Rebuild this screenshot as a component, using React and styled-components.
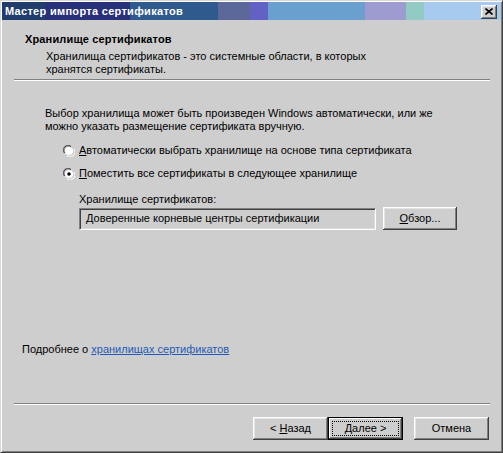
import styled, {createGlobalStyle, css} from "styled-components";

const GlobalStyle = createGlobalStyle`
    html, body {
        margin: 0;
        padding: 0;
        background: #cecece;
    }
    * {
        box-sizing: border-box;
    }
`;

const Raised = css`
    border: none;
    background: #cecece;
    box-shadow: inset -1px -1px #404040, inset 1px 1px #ffffff,
        inset -2px -2px #808080, inset 2px 2px #e4e4e4;
`;

const Window = styled.div`
    display: flex;
    flex-direction: column;
    width: 503px;
    height: 453px;
    padding: 1px;
    background: #cecece;
    border: 1px solid;
    border-color: #d8d8d8 #404040 #404040 #d8d8d8;
    box-shadow: inset 1px 1px #ffffff, inset -1px -1px #808080;
    font-family: "Liberation Sans", Arial, sans-serif;
    font-size: 11px;
    line-height: 13px;
    color: #000;
`;

const TitleBar = styled.div`
    display: flex;
    align-items: center;
    justify-content: space-between;
    height: 18px;
    padding: 1px 3px 0 3px;
    background: linear-gradient(
        to right,
        #213d6d 0 43px,
        #28307a 43px 128px,
        #2f5a8e 128px 216px,
        #5c6899 216px 248px,
        #6262c4 248px 266px,
        #6aa0d0 266px 363px,
        #9d9bd0 363px 404px,
        #91cbc3 404px 422px,
        #a7caef 422px 100%
    );
`;

const Title = styled.div`
    color: #fff;
    font-weight: bold;
    font-size: 11px;
    line-height: 17px;
    letter-spacing: 0.3px;
`;

const CloseButton = styled.div`
    ${Raised}
    width: 16px;
    height: 14px;
    display: flex;
    align-items: center;
    justify-content: center;
    margin-right: 1px;
`;

const Header = styled.div`
    padding: 13px 0 0 23px;
`;

const HeaderTitle = styled.div`
    font-weight: bold;
    letter-spacing: 0.15px;
`;

const HeaderText = styled.div`
    margin: 4px 0 0 21px;
`;

const Separator = styled.div`
    height: 2px;
    margin: ${(p) => p.$top || 0}px 11px 0 12px;
    border-top: 1px solid #808080;
    border-bottom: 1px solid #ffffff;
`;

const Main = styled.div`
    flex: 1;
    display: flex;
    flex-direction: column;
`;

const Body = styled.div`
    display: flex;
    flex-direction: column;
    padding: 26px 0 0 43px;
`;

const Options = styled.div`
    display: flex;
    flex-direction: column;
    gap: 10px;
    margin: 11px 0 0 18px;
`;

const Option = styled.div`
    display: flex;
    align-items: center;
    gap: 4px;
`;

const Store = styled.div`
    display: flex;
    flex-direction: column;
    gap: 1px;
    margin: 13px 0 0 34px;
`;

const StoreRow = styled.div`
    display: flex;
    align-items: center;
    gap: 7px;
`;

const Field = styled.div`
    width: 297px;
    height: 22px;
    display: flex;
    align-items: center;
    padding: 0 6px;
    border: 1px solid;
    border-color: #808080 #ffffff #ffffff #808080;
    box-shadow: inset 1px 1px #404040, inset -1px -1px #dcdcdc;
`;

const Button = styled.div`
    ${Raised}
    width: ${(p) => p.$width || 75}px;
    height: 23px;
    display: flex;
    align-items: center;
    justify-content: center;
    position: relative;
    ${(p) =>
        p.$default &&
        css`
            box-shadow: inset 0 0 0 1px #000, inset -2px -2px #404040,
                inset 2px 2px #ffffff, inset -3px -3px #808080;
            &::after {
                content: "";
                position: absolute;
                inset: 4px;
                border: 1px dotted #000;
            }
        `}
`;

const Key = styled.span`
    text-decoration: underline;
    text-underline-offset: 1px;
`;

const LinkRow = styled.div`
    margin: auto 0 47px 20px;
`;

const Link = styled.span`
    color: #1f5bb5;
    text-decoration: underline;
    text-underline-offset: 1px;
`;

const Footer = styled.div`
    display: flex;
    justify-content: flex-end;
    align-items: center;
    padding: 12px 12px 11px 0;
`;

const ButtonPair = styled.div`
    display: flex;
    margin-right: 11px;
`;

function Radio({checked}) {
    return (
        <svg width="12" height="12" viewBox="0 0 12 12">
            <path d="M1 8 A5 5 0 0 1 8 1" stroke="#808080" fill="none" />
            <path d="M2 8 A4 4 0 0 1 8 2" stroke="#404040" fill="none" />
            <circle cx="6" cy="6" r="4" fill="#fff" />
            <path d="M11 4 A5 5 0 0 1 4 11" stroke="#fff" fill="none" />
            <path d="M10 4 A4 4 0 0 1 4 10" stroke="#e0e0e0" fill="none" />
            {checked && <circle cx="6" cy="6" r="1.8" fill="#000" />}
        </svg>
    );
}

export default function App() {
    return (
        <>
            <GlobalStyle />
            <Window>
                <TitleBar>
                    <Title>Мастер импорта сертификатов</Title>
                    <CloseButton>
                        <svg width="8" height="7" viewBox="0 0 8 7">
                            <path
                                d="M0.5 0.5 L7.5 6.5 M7.5 0.5 L0.5 6.5"
                                stroke="#000"
                                strokeWidth="1.6"
                            />
                        </svg>
                    </CloseButton>
                </TitleBar>
                <Header>
                    <HeaderTitle>Хранилище сертификатов</HeaderTitle>
                    <HeaderText>
                        Хранилища сертификатов - это системные области, в которых
                        <br />
                        хранятся сертификаты.
                    </HeaderText>
                </Header>
                <Separator $top={3} />
                <Main>
                    <Body>
                        <div>
                            Выбор хранилища может быть произведен Windows автоматически, или же
                            <br />
                            можно указать размещение сертификата вручную.
                        </div>
                        <Options>
                            <Option>
                                <Radio />
                                <span>
                                    <Key>А</Key>втоматически выбрать хранилище на основе типа сертификата
                                </span>
                            </Option>
                            <Option>
                                <Radio checked />
                                <span>
                                    <Key>П</Key>оместить все сертификаты в следующее хранилище
                                </span>
                            </Option>
                        </Options>
                        <Store>
                            <div>Хранилище сертификатов:</div>
                            <StoreRow>
                                <Field>Доверенные корневые центры сертификации</Field>
                                <Button $width={74}>
                                    <span>
                                        <Key>О</Key>бзор...
                                    </span>
                                </Button>
                            </StoreRow>
                        </Store>
                    </Body>
                    <LinkRow>
                        Подробнее о <Link>хранилищах сертификатов</Link>
                    </LinkRow>
                </Main>
                <Separator />
                <Footer>
                    <ButtonPair>
                        <Button>
                            <span>
                                &lt; <Key>Н</Key>азад
                            </span>
                        </Button>
                        <Button $default>
                            <span>
                                <Key>Д</Key>алее &gt;
                            </span>
                        </Button>
                    </ButtonPair>
                    <Button>Отмена</Button>
                </Footer>
            </Window>
        </>
    );
}
